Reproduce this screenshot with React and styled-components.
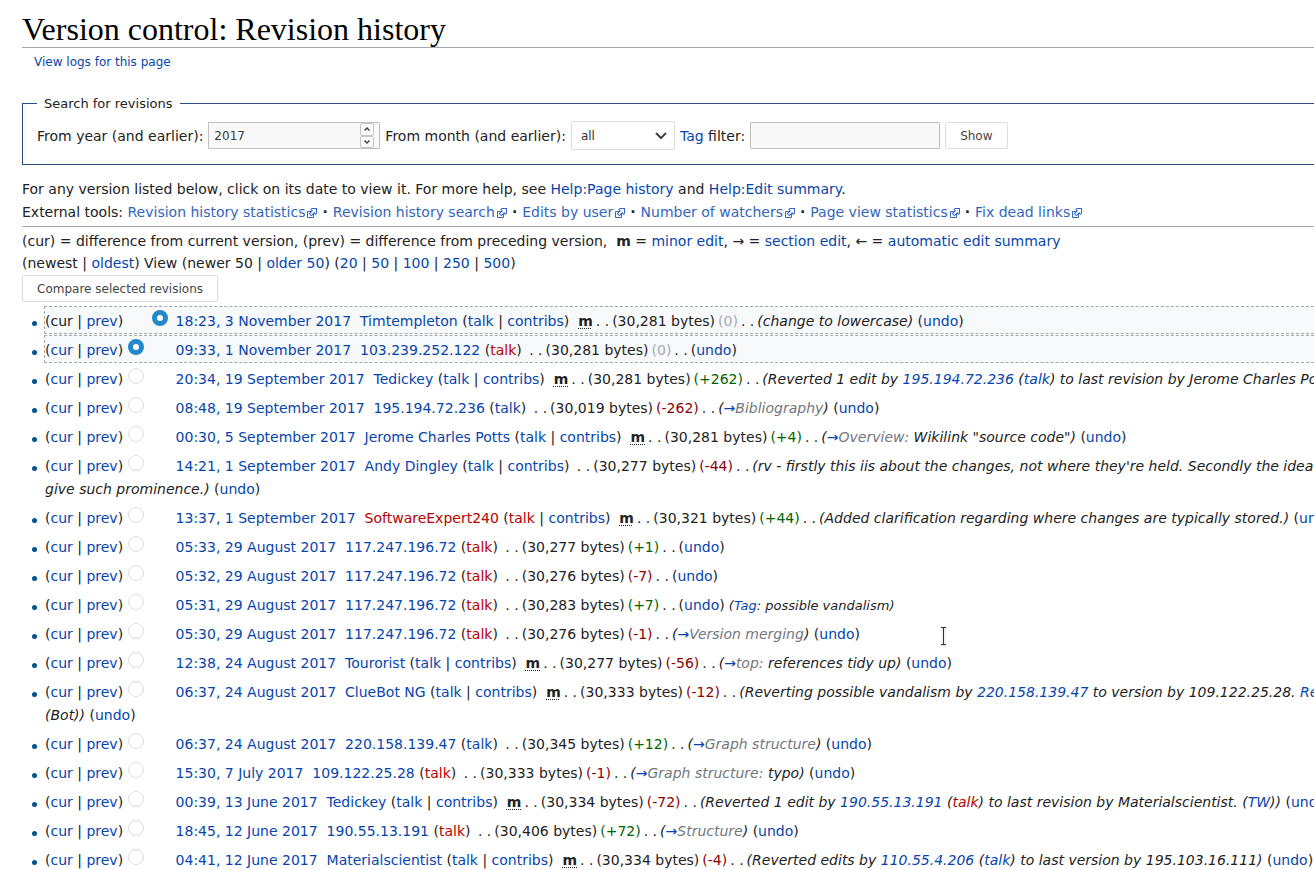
import React from "react";
import styled, { createGlobalStyle } from "styled-components";

const GlobalStyle = createGlobalStyle`
  body {
    margin: 0;
    background: #fff;
    color: #222;
    font-family: "DejaVu Sans", sans-serif;
    font-size: 14px;
    line-height: 22px;
  }
`;

const Page = styled.main`
  position: relative;
  padding: 10px 0 0 22px;
  overflow: hidden;
  white-space: nowrap;
`;

const Title = styled.h1`
  margin: 0;
  height: 37px;
  border-bottom: 1px solid #a2a9b1;
  color: #000;
  font-family: "Liberation Serif", serif;
  font-size: 32px;
  font-weight: 400;
  line-height: 38px;
`;

const Subtitle = styled.div`
  padding: 3px 0 0 12px;
  font-size: 12px;
`;

const tones = {
  link: "#0645ad",
  external: "#3366bb",
  missing: "#ba0000",
};

const Link = styled.a`
  color: ${(p) => tones[p.$tone || "link"]};
  text-decoration: none;
  &:hover {
    text-decoration: underline;
  }
`;

const SearchBox = styled.fieldset`
  min-width: 0;
  margin: 22px 0 0;
  padding: 9px 14px 14px;
  border: 1px solid #2a4b8d;
  border-right: 0;
`;

const Legend = styled.legend`
  padding: 0 7px;
  font-size: 13px;
  line-height: 17px;
`;

const Controls = styled.div`
  display: flex;
  align-items: center;
  gap: 5px;
`;

const NumberField = styled.span`
  display: flex;
  box-sizing: border-box;
  width: 172px;
  height: 27px;
  padding-right: 5px;
  border: 1px solid #c0c0c0;
  border-radius: 1px;
  background: #f8f8f8;
`;

const NumberInput = styled.input`
  flex: 1;
  min-width: 0;
  padding: 0 5px;
  border: 0;
  background: transparent;
  color: #3c3c3c;
  font: 12px "DejaVu Sans", sans-serif;
`;

const Spinner = styled.span`
  display: flex;
  flex-direction: column;
  width: 14px;
`;

const SpinButton = styled.button`
  display: flex;
  flex: 1;
  align-items: center;
  justify-content: center;
  padding: 0;
  border: 1px solid #c4c4c4;
  border-radius: 2px;
  background: #fafafa;
`;

const SelectField = styled.span`
  display: grid;
  align-items: center;
  width: 104px;
  & > * {
    grid-area: 1 / 1;
  }
  & > svg {
    justify-self: end;
    margin-right: 8px;
    pointer-events: none;
  }
`;

const Select = styled.select`
  appearance: none;
  width: 100%;
  height: 29px;
  padding: 0 9px;
  border: 1px solid #ddd;
  border-radius: 2px;
  background: #fff;
  color: #333;
  font: 12px "DejaVu Sans", sans-serif;
`;

const TextInput = styled.input`
  box-sizing: border-box;
  width: 190px;
  height: 27px;
  border: 1px solid #c0c0c0;
  border-radius: 1px;
  background: #f8f8f8;
  font: 12px "DejaVu Sans", sans-serif;
`;

const Button = styled.button`
  display: block;
  height: 27px;
  padding: 0 14px;
  border: 1px solid #ddd;
  border-radius: 2px;
  background: #fff;
  color: #444;
  font: 12px "DejaVu Sans", sans-serif;
`;

const Intro = styled.div`
  margin-top: 13px;
  padding-bottom: 2px;
  border-bottom: 1px solid #a2a9b1;
  line-height: 23px;
`;

const Guide = styled.div`
  padding: 3px 0 1px;
`;

const Text = styled.div``;

const Dot = styled.b`
  margin: 0 5px 0 4px;
`;

const ExternalMark = styled.svg`
  margin-left: 1px;
  vertical-align: -2px;
`;

const Revisions = styled.ul`
  margin: 4px 0 0;
  padding: 0;
  list-style: none;
  line-height: 23px;
`;

const Revision = styled.li`
  display: flex;
  margin-bottom: 1px;
  &::before {
    content: "";
    flex: none;
    width: 5px;
    height: 5px;
    margin: 15px 7px 0 10px;
    border-radius: 50%;
    background: #00528c;
  }
`;

const Entry = styled.div`
  flex: 1;
  min-width: 0;
  padding-top: 3px;
  border: 1px dashed ${(p) => (p.$selected ? "#a2a9b1" : "transparent")};
  border-right: 0;
  background: ${(p) => (p.$selected ? "#f8f9fa" : "transparent")};
`;

const Line = styled.div`
  white-space: pre;
`;

const Radio = styled.input`
  appearance: none;
  box-sizing: border-box;
  width: 16px;
  height: 16px;
  margin: 0 8px 0 0;
  border: 1px solid #ddd;
  border-radius: 50%;
  background: #fff;
  vertical-align: baseline;
  &:checked {
    border: 5px solid #2389ca;
  }
`;

const RadioGap = styled.span`
  display: inline-block;
  width: 24px;
`;

const Separator = styled.span`
  margin: 0 3px;
`;

const Minor = styled.abbr`
  font-weight: 700;
  text-decoration: underline dotted 1px;
  text-underline-offset: 2px;
`;

const Size = styled.span`
  margin-left: 3px;
  color: ${(p) => (p.$change > 0 ? "#006400" : p.$change < 0 ? "#8b0000" : "#a2a9b1")};
`;

const Section = styled.span`
  color: #72777d;
`;

const Tags = styled.i`
  font-size: 13px;
`;

const Caret = styled.svg`
  position: absolute;
  top: 627px;
  left: 939px;
  filter: drop-shadow(0 1px 1px #bbb);
`;

const A = ({ children, red }) => (
  <Link href="#" $tone={red ? "missing" : "link"}>{children}</Link>
);

const External = ({ children }) => (
  <Link href="#" $tone="external">
    {children}
    <ExternalMark width="12" height="12" viewBox="0 0 12 12" aria-hidden="true">
      <path fill="#fff" stroke="#3366bb" d="M1.500 4.518h5.982V10.500H1.500z" />
      <path fill="#3366cc" d="M5.765 1H11v5.390L9.427 7.937l-1.310-1.310L5.393 9.350l-2.690-2.688 2.810-2.808L4.200 2.544z" />
      <path fill="#fff" d="M9.995 2.004l.022 4.885L8.200 5.070 5.320 7.950 4.090 6.723l2.882-2.880-1.850-1.852z" />
    </ExternalMark>
  </Link>
);

const Chevron = ({ up, size = 6, weight = 1.5 }) => (
  <svg width={size} height={size} viewBox="0 0 6 6" fill="none" stroke="#444" strokeWidth={weight} aria-hidden="true">
    <path d={up ? "M.5 4.500 3 2l2.500 2.500" : "M.5 1.500 3 4l2.500-2.500"} />
  </svg>
);

const Goto = ({ name, text }) => (
  <>(<A>→</A><Section>{name}</Section>{text})</>
);

const revisions = [
  { date: "18:23, 3 November 2017", user: "Timtempleton", contribs: true, minor: true, bytes: "30,281", change: 0, note: "(change to lowercase)" },
  { date: "09:33, 1 November 2017", user: "103.239.252.122", redTalk: true, bytes: "30,281", change: 0 },
  { date: "20:34, 19 September 2017", user: "Tedickey", contribs: true, minor: true, bytes: "30,281", change: 262, note: <>(Reverted 1 edit by <A>195.194.72.236</A> (<A>talk</A>) to last revision by Jerome Charles Potts.)</> },
  { date: "08:48, 19 September 2017", user: "195.194.72.236", bytes: "30,019", change: -262, note: <Goto name="Bibliography" /> },
  { date: "00:30, 5 September 2017", user: "Jerome Charles Potts", contribs: true, minor: true, bytes: "30,281", change: 4, note: <Goto name="Overview:" text={' Wikilink "source code"'} /> },
  { date: "14:21, 1 September 2017", user: "Andy Dingley", contribs: true, bytes: "30,277", change: -44, note: "(rv - firstly this iis about the changes, not where they're held. Secondly the idea of", rest: "give such prominence.)" },
  { date: "13:37, 1 September 2017", user: "SoftwareExpert240", redUser: true, redTalk: true, contribs: true, minor: true, bytes: "30,321", change: 44, note: "(Added clarification regarding where changes are typically stored.)" },
  { date: "05:33, 29 August 2017", user: "117.247.196.72", redTalk: true, bytes: "30,277", change: 1 },
  { date: "05:32, 29 August 2017", user: "117.247.196.72", redTalk: true, bytes: "30,276", change: -7 },
  { date: "05:31, 29 August 2017", user: "117.247.196.72", redTalk: true, bytes: "30,283", change: 7, tag: "possible vandalism" },
  { date: "05:30, 29 August 2017", user: "117.247.196.72", redTalk: true, bytes: "30,276", change: -1, note: <Goto name="Version merging" /> },
  { date: "12:38, 24 August 2017", user: "Tourorist", contribs: true, minor: true, bytes: "30,277", change: -56, note: <Goto name="top:" text=" references tidy up" /> },
  { date: "06:37, 24 August 2017", user: "ClueBot NG", contribs: true, minor: true, bytes: "30,333", change: -12, note: <>(Reverting possible vandalism by <A>220.158.139.47</A> to version by 109.122.25.28. <A>Report False Positive?</A></>, rest: "(Bot))" },
  { date: "06:37, 24 August 2017", user: "220.158.139.47", bytes: "30,345", change: 12, note: <Goto name="Graph structure" /> },
  { date: "15:30, 7 July 2017", user: "109.122.25.28", redTalk: true, bytes: "30,333", change: -1, note: <Goto name="Graph structure:" text=" typo" /> },
  { date: "00:39, 13 June 2017", user: "Tedickey", contribs: true, minor: true, bytes: "30,334", change: -72, note: <>(Reverted 1 edit by <A>190.55.13.191</A> (<A red>talk</A>) to last revision by Materialscientist. (<A>TW</A>))</> },
  { date: "18:45, 12 June 2017", user: "190.55.13.191", redTalk: true, bytes: "30,406", change: 72, note: <Goto name="Structure" /> },
  { date: "04:41, 12 June 2017", user: "Materialscientist", contribs: true, minor: true, bytes: "30,334", change: -4, note: <>(Reverted edits by <A>110.55.4.206</A> (<A>talk</A>) to last version by 195.103.16.111)</> },
];

const Undo = () => <>(<A>undo</A>)</>;

function RevisionRow({ item, index }) {
  const { date, user, change } = item;
  const radio = (name, checked) => (
    <Radio type="radio" name={name} defaultChecked={checked} aria-label={`${date}, ${user}`} />
  );
  return (
    <Revision>
      <Entry $selected={index < 2}>
        <Line>
          ({index === 0 ? "cur" : <A>cur</A>} | <A>prev</A>){" "}
          {index === 0 ? <RadioGap /> : radio("older", index === 1)}
          {index === 0 ? radio("newer", true) : <RadioGap />}
          <A>{date}</A>{"  "}
          <A red={item.redUser}>{user}</A> (<A red={item.redTalk}>talk</A>
          {item.contribs && <> | <A>contribs</A></>}){" "}
          {item.minor && <> <Minor title="minor edit">m</Minor></>}
          <Separator>. .</Separator>
          ({item.bytes} bytes)
          <Size $change={change}>({change > 0 ? `+${change}` : change})</Size>
          <Separator>. .</Separator>
          {item.note && <i>{item.note}</i>}
          {item.note && !item.rest && " "}
          {!item.rest && <Undo />}
          {item.tag && <Tags> (<A>Tag</A>: {item.tag})</Tags>}
        </Line>
        {item.rest && <Line><i>{item.rest}</i> <Undo /></Line>}
      </Entry>
    </Revision>
  );
}

const tools = [
  "Revision history statistics",
  "Revision history search",
  "Edits by user",
  "Number of watchers",
  "Page view statistics",
  "Fix dead links",
];

export default function App() {
  return (
    <Page>
      <GlobalStyle />
      <Title>Version control: Revision history</Title>
      <Subtitle><A>View logs for this page</A></Subtitle>

      <SearchBox>
        <Legend>Search for revisions</Legend>
        <Controls>
          <label htmlFor="year">From year (and earlier):</label>
          <NumberField>
            <NumberInput id="year" inputMode="numeric" defaultValue="2017" />
            <Spinner>
              <SpinButton type="button" aria-label="Increase year"><Chevron up /></SpinButton>
              <SpinButton type="button" aria-label="Decrease year"><Chevron /></SpinButton>
            </Spinner>
          </NumberField>
          <label htmlFor="month">From month (and earlier):</label>
          <SelectField>
            <Select id="month" defaultValue="all">
              <option value="all">all</option>
            </Select>
            <Chevron size={12} weight={1} />
          </SelectField>
          <label htmlFor="tag"><A>Tag</A> filter:</label>
          <TextInput id="tag" type="text" />
          <Button type="submit">Show</Button>
        </Controls>
      </SearchBox>

      <Intro>
        <Text>
          For any version listed below, click on its date to view it. For more help, see{" "}
          <A>Help:Page history</A> and <A>Help:Edit summary</A>.
        </Text>
        <Text>
          External tools:{" "}
          {tools.map((tool, i) => (
            <React.Fragment key={tool}>
              {i > 0 && <Dot>·</Dot>}
              <External>{tool}</External>
            </React.Fragment>
          ))}
        </Text>
      </Intro>

      <Guide>
        <Text>
          (cur) = difference from current version, (prev) = difference from preceding version,&nbsp;{" "}
          <b>m</b> = <A>minor edit</A>, → = <A>section edit</A>, ← = <A>automatic edit summary</A>
        </Text>
        <Text>
          (newest | <A>oldest</A>) View (newer 50 | <A>older 50</A>) (<A>20</A> | <A>50</A> | <A>100</A> | <A>250</A> | <A>500</A>)
        </Text>
      </Guide>

      <Button type="button">Compare selected revisions</Button>

      <Revisions>
        {revisions.map((item, index) => (
          <RevisionRow key={item.date} item={item} index={index} />
        ))}
      </Revisions>

      <Caret width="9" height="18" viewBox="0 0 9 18" fill="none" stroke="#333" aria-hidden="true">
        <path d="M2 .5h5M2 17.500h5M4.500 1v16" />
      </Caret>
    </Page>
  );
}
